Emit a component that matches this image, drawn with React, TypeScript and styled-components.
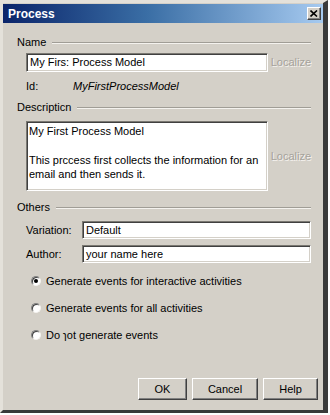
import styled, { createGlobalStyle } from "styled-components";

const GlobalStyle = createGlobalStyle`
  html, body {
    margin: 0;
    padding: 0;
    background: #ffffff;
  }
  body {
    font-family: "Liberation Sans", Arial, sans-serif;
    font-size: 11px;
    color: #000;
  }
`;

const Window = styled.div`
  width: 328px;
  height: 413px;
  box-sizing: border-box;
  background: #d4d0c8;
  border-top: 3px solid #e4e1da;
  border-left: 3px solid #e4e1da;
  border-right: 5px solid #3a3a3a;
  border-bottom: 3px solid #3a3a3a;
  display: flex;
  flex-direction: column;
`;

const TitleBar = styled.div`
  height: 19px;
  margin-top: 1px;
  display: flex;
  align-items: center;
  justify-content: space-between;
  padding: 0 2px 0 5px;
  background: linear-gradient(90deg, #0a246a 0%, #3a6ea5 45%, #a6caf0 100%);
`;

const Title = styled.span`
  color: #fff;
  font-weight: bold;
  font-size: 12px;
`;

const CloseButton = styled.div`
  width: 14px;
  height: 13px;
  box-sizing: border-box;
  background: #d4d0c8;
  border: 1px solid;
  border-color: #fff #404040 #404040 #fff;
  box-shadow: inset -1px -1px 0 #808080;
  display: flex;
  align-items: center;
  justify-content: center;
`;

const Body = styled.div`
  flex: 1;
  display: flex;
  flex-direction: column;
  padding: 13px 12px 0 14px;
`;

const Heading = styled.div<{ $top?: number }>`
  display: flex;
  align-items: center;
  gap: 6px;
  margin-top: ${(p) => p.$top ?? 0}px;
  height: 13px;
  line-height: 13px;
`;

const HeadingLine = styled.div`
  flex: 1;
  height: 0;
  border-top: 1px solid #a09d96;
  border-bottom: 1px solid #f4f2ee;
`;

const FieldRow = styled.div<{ $top?: number }>`
  display: flex;
  align-items: center;
  margin-top: ${(p) => p.$top ?? 0}px;
  padding-left: 9px;
  line-height: 13px;
`;

const TextBox = styled.div<{ $width: number; $height?: number }>`
  width: ${(p) => p.$width}px;
  height: ${(p) => p.$height ?? 19}px;
  box-sizing: border-box;
  background: #fff;
  border: 1px solid;
  border-color: #7a7872 #ffffff #ffffff #7a7872;
  box-shadow: inset 1px 1px 0 #404040, inset -1px -1px 0 #d4d0c8;
  padding: 2px 3px;
  display: flex;
  align-items: center;
  white-space: nowrap;
`;

const TextArea = styled(TextBox)`
  align-items: flex-start;
  flex-direction: column;
  white-space: normal;
  line-height: 14.3px;
  padding: 2px 2px;
`;

const Localize = styled.span`
  margin-left: 3px;
  color: #a5a29b;
  text-shadow: 1px 1px 0 #f4f2ee;
`;

const IdLabel = styled.span`
  width: 47px;
`;

const IdValue = styled.span`
  font-style: italic;
`;

const FieldLabel = styled.span`
  width: 56px;
`;

const RadioRow = styled.label<{ $top: number }>`
  display: flex;
  align-items: center;
  gap: 5px;
  height: 13px;
  margin-top: ${(p) => p.$top}px;
  padding-left: 14px;
`;

const RadioCircle = styled.span<{ $checked?: boolean }>`
  width: 8px;
  height: 8px;
  border-radius: 50%;
  background: #fff;
  border: 1px solid;
  border-color: #808080 #f4f2ee #f4f2ee #808080;
  box-shadow: inset 1px 1px 0 #404040;
  display: flex;
  align-items: center;
  justify-content: center;
  &::after {
    content: "";
    width: 4px;
    height: 4px;
    border-radius: 50%;
    background: ${(p) => (p.$checked ? "#000" : "transparent")};
  }
`;

const ButtonBar = styled.div`
  margin-top: auto;
  margin-bottom: 10px;
  margin-right: -7px;
  display: flex;
  justify-content: flex-end;
  gap: 5px;
`;

const Button = styled.button<{ $width: number }>`
  width: ${(p) => p.$width}px;
  height: 22px;
  font-family: "Liberation Sans", Arial, sans-serif;
  font-size: 11px;
  color: #000;
  background: #d4d0c8;
  border: 1px solid;
  border-color: #fff #404040 #404040 #fff;
  box-shadow: inset -1px -1px 0 #808080;
  padding: 0;
`;

export default function App() {
  return (
    <>
      <GlobalStyle />
      <Window>
        <TitleBar>
          <Title>Process</Title>
          <CloseButton>
            <svg width="8" height="7" viewBox="0 0 8 7">
              <path d="M0.5 0.5 L7 6.5 M7 0.5 L0.5 6.5" stroke="#000" strokeWidth="1.6" />
            </svg>
          </CloseButton>
        </TitleBar>
        <Body>
          <Heading>
            Name <HeadingLine />
          </Heading>
          <FieldRow $top={4}>
            <TextBox $width={243}>My Firs: Process Model</TextBox>
            <Localize>Localize</Localize>
          </FieldRow>
          <FieldRow $top={8}>
            <IdLabel>Id:</IdLabel>
            <IdValue>MyFirstProcessModel</IdValue>
          </FieldRow>
          <Heading $top={8}>
            Descripticn <HeadingLine />
          </Heading>
          <FieldRow $top={7}>
            <TextArea $width={244} $height={70}>
              <span>My First Process Model</span>
              <span>&nbsp;</span>
              <span>This prccess first collects the information for an email and then sends it.</span>
            </TextArea>
            <Localize>Localize</Localize>
          </FieldRow>
          <Heading $top={10}>
            Others <HeadingLine />
          </Heading>
          <FieldRow $top={7}>
            <FieldLabel>Variation:</FieldLabel>
            <TextBox $width={229} $height={18}>Default</TextBox>
          </FieldRow>
          <FieldRow $top={6}>
            <FieldLabel>Author:</FieldLabel>
            <TextBox $width={229} $height={18}>your name here</TextBox>
          </FieldRow>
          <RadioRow $top={11}>
            <RadioCircle $checked />
            Generate events for interactive activities
          </RadioRow>
          <RadioRow $top={14}>
            <RadioCircle />
            Generate events for all activities
          </RadioRow>
          <RadioRow $top={14}>
            <RadioCircle />
            Do ɿot generate events
          </RadioRow>
          <ButtonBar>
            <Button $width={49}>OK</Button>
            <Button $width={66}>Cancel</Button>
            <Button $width={55}>Help</Button>
          </ButtonBar>
        </Body>
      </Window>
    </>
  );
}
